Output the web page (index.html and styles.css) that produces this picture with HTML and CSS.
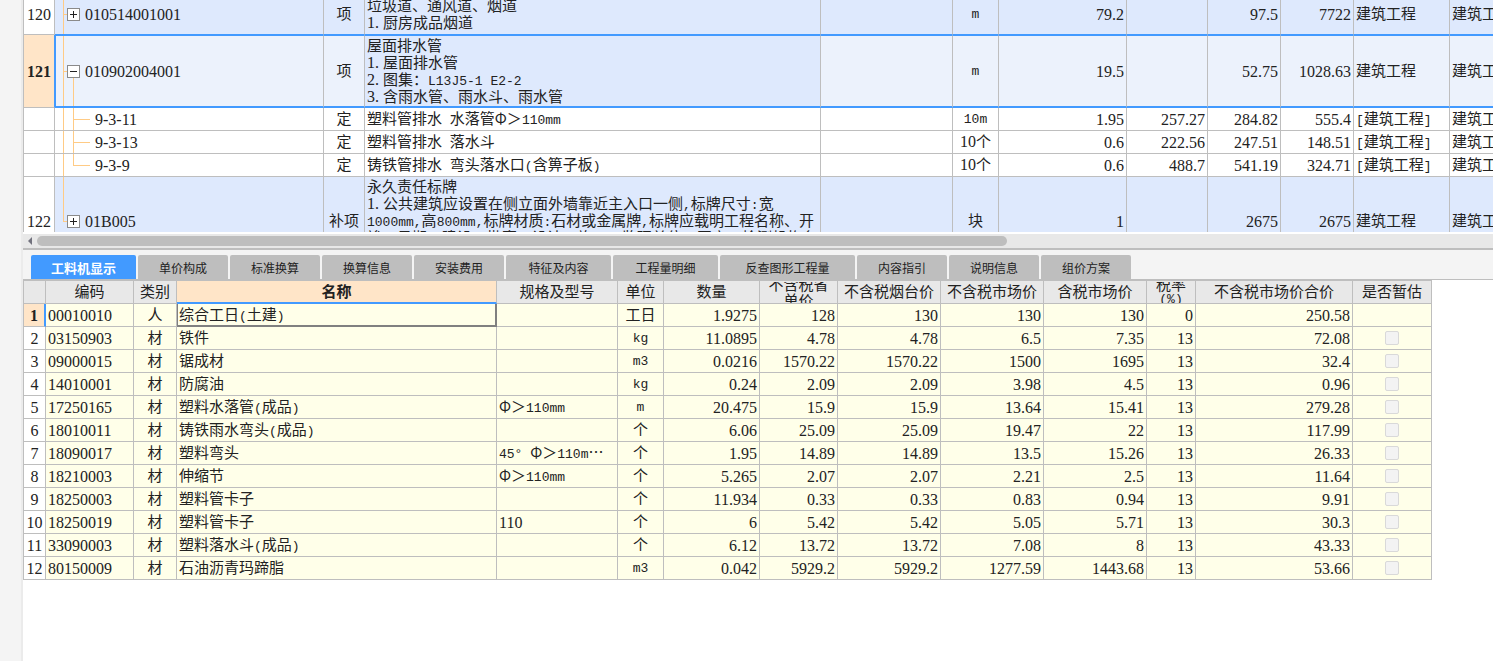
FILE: index.html
```
<!DOCTYPE html>
<html lang="zh-CN">
<head>
<meta charset="utf-8">
<title>工料机显示</title>
<link rel="stylesheet" href="styles.css">
</head>
<body>
<div class="app">
<div class="gutter"></div>
<main class="main">
<section class="bill-view">
<table class="grid bill">
<colgroup><col class="b-no"><col class="b-code"><col class="b-kind"><col class="b-desc"><col class="b-spec"><col class="b-unit"><col class="b-qty"><col class="b-price"><col class="b-comp"><col class="b-total"><col class="b-prof"><col class="b-last"></colgroup>
<tbody>
<tr class="item item-first"><td class="no">120</td><td class="code"><i class="trunk"></i><i class="twig"></i><button class="toggle" aria-label="展开"></button>010514001001</td><td class="c zh">项</td><td class="desc">垃圾道、通风道、烟道<br><span class="s">1. </span>厨房成品烟道</td><td></td><td class="c u">m</td><td class="r">79.2</td><td></td><td class="r">97.5</td><td class="r">7722</td><td class="zh">建筑工程</td><td class="zh">建筑工程</td></tr>
<tr class="item item-current"><td class="no">121</td><td class="code"><i class="trunk"></i><i class="twig"></i><i class="stem"></i><button class="toggle open" aria-label="收起"></button>010902004001</td><td class="c zh">项</td><td class="desc">屋面排水管<br><span class="s">1. </span>屋面排水管<br><span class="s">2. </span>图集：<span class="n">L13J5-1 E2-2</span><br><span class="s">3. </span>含雨水管、雨水斗、雨水管</td><td></td><td class="c u">m</td><td class="r">19.5</td><td></td><td class="r">52.75</td><td class="r">1028.63</td><td class="zh">建筑工程</td><td class="zh">建筑工程</td></tr>
<tr class="norm"><td class="no"></td><td class="code"><i class="trunk"></i><i class="branch"></i>9-3-11</td><td class="c zh">定</td><td class="zh">塑料管排水<span class="n"> </span>水落管Φ＞<span class="n">110mm</span></td><td></td><td class="c u">10m</td><td class="r">1.95</td><td class="r">257.27</td><td class="r">284.82</td><td class="r">555.4</td><td class="zh"><span class="n">[</span>建筑工程<span class="n">]</span></td><td class="zh">建筑工程</td></tr>
<tr class="norm"><td class="no"></td><td class="code"><i class="trunk"></i><i class="branch"></i>9-3-13</td><td class="c zh">定</td><td class="zh">塑料管排水<span class="n"> </span>落水斗</td><td></td><td class="c zh"><span class="s">10</span>个</td><td class="r">0.6</td><td class="r">222.56</td><td class="r">247.51</td><td class="r">148.51</td><td class="zh"><span class="n">[</span>建筑工程<span class="n">]</span></td><td class="zh">建筑工程</td></tr>
<tr class="norm"><td class="no"></td><td class="code"><i class="trunk"></i><i class="branch end"></i>9-3-9</td><td class="c zh">定</td><td class="zh">铸铁管排水<span class="n"> </span>弯头落水口<span class="n">(</span>含箅子板<span class="n">)</span></td><td></td><td class="c zh"><span class="s">10</span>个</td><td class="r">0.6</td><td class="r">488.7</td><td class="r">541.19</td><td class="r">324.71</td><td class="zh"><span class="n">[</span>建筑工程<span class="n">]</span></td><td class="zh">建筑工程</td></tr>
<tr class="item item-last"><td class="no">122</td><td class="code"><i class="trunk half"></i><i class="twig"></i><button class="toggle" aria-label="展开"></button>01B005</td><td class="c zh">补项</td><td class="desc">永久责任标牌<br><span class="s">1. </span>公共建筑应设置在侧立面外墙靠近主入口一侧<span class="n">,</span>标牌尺寸<span class="n">:</span>宽<br><span class="n">1000mm,</span>高<span class="n">800mm,</span>标牌材质<span class="n">:</span>石材或金属牌<span class="n">,</span>标牌应载明工程名称、开<br>竣工日期、建设、勘察、设计、施工、监理单位、国家、检测机构名</td><td></td><td class="c zh">块</td><td class="r">1</td><td></td><td class="r">2675</td><td class="r">2675</td><td class="zh">建筑工程</td><td class="zh">建筑工程</td></tr>
</tbody>
</table>
</section>
<div class="scrollbar"><svg width="14" height="14" viewBox="0 0 14 14" aria-hidden="true"><path d="M9 3v8L5 7z" fill="#72727e"/></svg><div class="thumb"></div></div>
<nav class="tabs">
<button class="tab active">工料机显示</button><button class="tab">单价构成</button><button class="tab">标准换算</button><button class="tab">换算信息</button><button class="tab">安装费用</button><button class="tab w5">特征及内容</button><button class="tab w5">工程量明细</button><button class="tab w7">反查图形工程量</button><button class="tab">内容指引</button><button class="tab">说明信息</button><button class="tab">组价方案</button>
</nav>
<section class="res-view">
<table class="grid res">
<colgroup><col class="r-no"><col class="r-code"><col class="r-kind"><col class="r-name"><col class="r-spec"><col class="r-unit"><col class="r-qty"><col class="r-prov"><col class="r-price"><col class="r-price"><col class="r-price"><col class="r-tax"><col class="r-sum"><col class="r-est"></colgroup>
<thead><tr><th></th><th>编码</th><th>类别</th><th class="sorted">名称</th><th>规格及型号</th><th>单位</th><th>数量</th><th class="tight"><div class="two">不含税省<br>单价</div></th><th>不含税烟台价</th><th>不含税市场价</th><th>含税市场价</th><th class="tight"><div class="two">税率<br><span class="n">(%)</span></div></th><th>不含税市场价合价</th><th>是否暂估</th></tr></thead>
<tbody>
<tr class="current"><td class="no">1</td><td>00010010</td><td class="c zh">人</td><td class="zh focus">综合工日<span class="n">(</span>土建<span class="n">)</span></td><td></td><td class="c zh">工日</td><td class="r">1.9275</td><td class="r">128</td><td class="r">130</td><td class="r">130</td><td class="r">130</td><td class="r">0</td><td class="r">250.58</td><td></td></tr>
<tr><td class="no">2</td><td>03150903</td><td class="c zh">材</td><td class="zh">铁件</td><td></td><td class="c u">kg</td><td class="r">11.0895</td><td class="r">4.78</td><td class="r">4.78</td><td class="r">6.5</td><td class="r">7.35</td><td class="r">13</td><td class="r">72.08</td><td class="c"><input type="checkbox" disabled aria-label="是否暂估"></td></tr>
<tr><td class="no">3</td><td>09000015</td><td class="c zh">材</td><td class="zh">锯成材</td><td></td><td class="c u">m3</td><td class="r">0.0216</td><td class="r">1570.22</td><td class="r">1570.22</td><td class="r">1500</td><td class="r">1695</td><td class="r">13</td><td class="r">32.4</td><td class="c"><input type="checkbox" disabled aria-label="是否暂估"></td></tr>
<tr><td class="no">4</td><td>14010001</td><td class="c zh">材</td><td class="zh">防腐油</td><td></td><td class="c u">kg</td><td class="r">0.24</td><td class="r">2.09</td><td class="r">2.09</td><td class="r">3.98</td><td class="r">4.5</td><td class="r">13</td><td class="r">0.96</td><td class="c"><input type="checkbox" disabled aria-label="是否暂估"></td></tr>
<tr><td class="no">5</td><td>17250165</td><td class="c zh">材</td><td class="zh">塑料水落管<span class="n">(</span>成品<span class="n">)</span></td><td class="zh">Φ＞<span class="n">110mm</span></td><td class="c u">m</td><td class="r">20.475</td><td class="r">15.9</td><td class="r">15.9</td><td class="r">13.64</td><td class="r">15.41</td><td class="r">13</td><td class="r">279.28</td><td class="c"><input type="checkbox" disabled aria-label="是否暂估"></td></tr>
<tr><td class="no">6</td><td>18010011</td><td class="c zh">材</td><td class="zh">铸铁雨水弯头<span class="n">(</span>成品<span class="n">)</span></td><td></td><td class="c zh">个</td><td class="r">6.06</td><td class="r">25.09</td><td class="r">25.09</td><td class="r">19.47</td><td class="r">22</td><td class="r">13</td><td class="r">117.99</td><td class="c"><input type="checkbox" disabled aria-label="是否暂估"></td></tr>
<tr><td class="no">7</td><td>18090017</td><td class="c zh">材</td><td class="zh">塑料弯头</td><td class="zh"><span class="n">45° </span>Φ＞<span class="n">110m</span>⋯</td><td class="c zh">个</td><td class="r">1.95</td><td class="r">14.89</td><td class="r">14.89</td><td class="r">13.5</td><td class="r">15.26</td><td class="r">13</td><td class="r">26.33</td><td class="c"><input type="checkbox" disabled aria-label="是否暂估"></td></tr>
<tr><td class="no">8</td><td>18210003</td><td class="c zh">材</td><td class="zh">伸缩节</td><td class="zh">Φ＞<span class="n">110mm</span></td><td class="c zh">个</td><td class="r">5.265</td><td class="r">2.07</td><td class="r">2.07</td><td class="r">2.21</td><td class="r">2.5</td><td class="r">13</td><td class="r">11.64</td><td class="c"><input type="checkbox" disabled aria-label="是否暂估"></td></tr>
<tr><td class="no">9</td><td>18250003</td><td class="c zh">材</td><td class="zh">塑料管卡子</td><td></td><td class="c zh">个</td><td class="r">11.934</td><td class="r">0.33</td><td class="r">0.33</td><td class="r">0.83</td><td class="r">0.94</td><td class="r">13</td><td class="r">9.91</td><td class="c"><input type="checkbox" disabled aria-label="是否暂估"></td></tr>
<tr><td class="no">10</td><td>18250019</td><td class="c zh">材</td><td class="zh">塑料管卡子</td><td>110</td><td class="c zh">个</td><td class="r">6</td><td class="r">5.42</td><td class="r">5.42</td><td class="r">5.05</td><td class="r">5.71</td><td class="r">13</td><td class="r">30.3</td><td class="c"><input type="checkbox" disabled aria-label="是否暂估"></td></tr>
<tr><td class="no">11</td><td>33090003</td><td class="c zh">材</td><td class="zh">塑料落水斗<span class="n">(</span>成品<span class="n">)</span></td><td></td><td class="c zh">个</td><td class="r">6.12</td><td class="r">13.72</td><td class="r">13.72</td><td class="r">7.08</td><td class="r">8</td><td class="r">13</td><td class="r">43.33</td><td class="c"><input type="checkbox" disabled aria-label="是否暂估"></td></tr>
<tr><td class="no">12</td><td>80150009</td><td class="c zh">材</td><td class="zh">石油沥青玛蹄脂</td><td></td><td class="c u">m3</td><td class="r">0.042</td><td class="r">5929.2</td><td class="r">5929.2</td><td class="r">1277.59</td><td class="r">1443.68</td><td class="r">13</td><td class="r">53.66</td><td class="c"><input type="checkbox" disabled aria-label="是否暂估"></td></tr>
</tbody>
</table>
</section>
</main>
</div>
</body>
</html>
```
FILE: styles.css
```
* { box-sizing: border-box; }
body {
  margin: 0;
  background: #fff;
  color: #222;
  font-family: "Liberation Serif", "Noto Sans CJK SC", serif;
  font-size: 16px;
}
.app { display: flex; min-height: 100vh; }
.gutter { flex: none; width: 23px; background: #f4f4f4; border-right: 2px solid #ebebeb; }
.main { flex: 1; min-width: 0; overflow: hidden; }

.grid { table-layout: fixed; border-collapse: separate; border-spacing: 0; border-left: 1px solid #bebebe; width: 0; }
.grid td, .grid th {
  padding: 0 2px;
  border-right: 1px solid #bebebe;
  border-bottom: 1px solid #bebebe;
  white-space: nowrap;
  overflow: hidden;
  line-height: 17px;
  vertical-align: middle;
}
.grid .c { text-align: center; }
.grid .r { text-align: right; }
.grid .zh, .grid .desc, .grid th { padding-bottom: 3px; font-family: "Noto Sans CJK SC", sans-serif; font-size: 15px; font-weight: 400; }
.grid .desc { padding-bottom: 2px; }
.n, .s { line-height: 0; white-space: pre; }
.n { font-family: "Liberation Mono", monospace; font-size: 13px; }
.s { font-family: "Liberation Serif", serif; font-size: 16px; }
.grid .u { font-family: "Liberation Mono", monospace; font-size: 13px; }
.grid .no { background: #fff; text-align: center; padding: 0; }

/* bill of quantities */
.bill-view { height: 232px; overflow: hidden; }
.bill { margin-top: -6px; }
.b-no { width: 31px; } .b-code { width: 269px; } .b-kind { width: 41px; } .b-desc { width: 456px; }
.b-spec { width: 132px; } .b-unit { width: 46px; } .b-qty { width: 128px; } .b-price { width: 81px; }
.b-comp { width: 73px; } .b-total { width: 73px; } .b-prof { width: 96px; } .b-last { width: 96px; }
.bill tr { height: 23px; }
.bill .item-first { height: 41px; }
.bill .item-current { height: 73px; }
.bill .item-last { height: 89px; }
.item td { background: #dee9fd; }
.bill .item-current td { background: #ecf2fc; border-top: 1px solid #429aff; border-bottom: 2px solid #429aff; }
.bill .item-current .desc { background: #dee9fd; }
.bill .item-first td:not(.no) { border-bottom-color: #429aff; }
.bill .item-current .no {
  background: #ffe5c8;
  border-top: 0;
  border-bottom: 1px solid #bebebe;
  border-right-color: #429aff;
  font-weight: 700;
}
.bill .item-current .code { border-left: 1px solid #429aff; padding-left: 29px; }
.bill .item-last .desc { vertical-align: top; }
.bill .code { position: relative; padding-left: 30px; }
.bill .norm .code { padding-left: 40px; }

.trunk, .twig, .stem, .branch, .toggle { position: absolute; }
.trunk { left: 8px; top: 0; bottom: 0; width: 1px; background: #ffcb85; }
.trunk.half { bottom: 50%; }
.twig { left: 8px; top: 50%; width: 4px; height: 1px; background: #ffcb85; }
.stem { left: 18px; top: 50%; bottom: 0; width: 1px; background: #ffcb85; }
.branch { left: 18px; top: 0; bottom: 0; width: 1px; background: #ffcb85; }
.branch::after { content: ""; position: absolute; left: 0; top: 11px; width: 17px; height: 1px; background: #ffcb85; }
.branch.end { bottom: 11px; }
.item-current .trunk, .item-current .twig { left: 7px; }
.item-current .stem { left: 17px; }
.toggle {
  left: 12px;
  top: calc(50% - 6px);
  width: 13px;
  height: 13px;
  padding: 0;
  border: 1px solid #8a8a8a;
  background: linear-gradient(#222, #222) center / 7px 1px no-repeat, linear-gradient(#222, #222) center / 1px 7px no-repeat, #fff;
}
.toggle.open { left: 11px; background: linear-gradient(#222, #222) center / 7px 1px no-repeat, #fff; }

.scrollbar {
  display: flex;
  align-items: center;
  height: 18px;
  border-top: 2px solid #fff;
  border-bottom: 2px solid #bebebe;
  background: #e8e8e8;
}
.thumb { width: 66%; height: 10px; border-radius: 5px; background: #bebebe; }

/* detail tabs */
.tabs { display: flex; gap: 2px; padding: 5px 8px 0; height: 30px; background: #f4f4f4; border-bottom: 1px solid #bebebe; }
.tab {
  flex: none;
  width: 90px;
  padding: 2px 0 0;
  border: 0;
  border-radius: 2px 2px 0 0;
  background: #bebebe;
  color: #222;
  font: 12px/20px "Noto Sans CJK SC", sans-serif;
}
.tab.active { width: 105px; background: #429aff; color: #fff; font-size: 13px; font-weight: 700; }
.tab.w5 { width: 105px; }
.tab.w7 { width: 135px; }

/* resource breakdown */
.r-no { width: 22px; } .r-code { width: 88px; } .r-kind { width: 43px; } .r-name { width: 320px; }
.r-spec { width: 121px; } .r-unit { width: 46px; } .r-qty { width: 96px; } .r-prov { width: 78px; }
.r-price { width: 103px; } .r-tax { width: 49px; } .r-sum { width: 157px; } .r-est { width: 79px; }
.res tr { height: 23px; }
.res thead tr { height: 24px; }
.res th { background: #e8e8e8; border-top: 1px solid #bebebe; padding: 0 0 3px; }
.res .tight { padding: 0; }
.res .sorted { background: #ffe5c8; border-bottom: 2px solid #429aff; font-weight: 700; }
.res td { background: #ffffe9; }
.res .current .no { background: #ffe5c8; border-right: 2px solid #429aff; font-weight: 700; }
.res .focus { box-shadow: inset 1px 0 #808080, inset 0 -1px #808080, inset -1px 0 #808080; border-right-color: #808080; border-bottom-color: #808080; }
.two { display: grid; align-content: center; height: 21px; line-height: 16px; overflow: hidden; }
.two .n { line-height: 16px; }
.res input {
  appearance: none;
  display: block;
  width: 14px;
  height: 14px;
  margin: 0 auto;
  border: 1px solid #d9d9d9;
  border-radius: 2px;
  background: #f3f3f3;
}
```
